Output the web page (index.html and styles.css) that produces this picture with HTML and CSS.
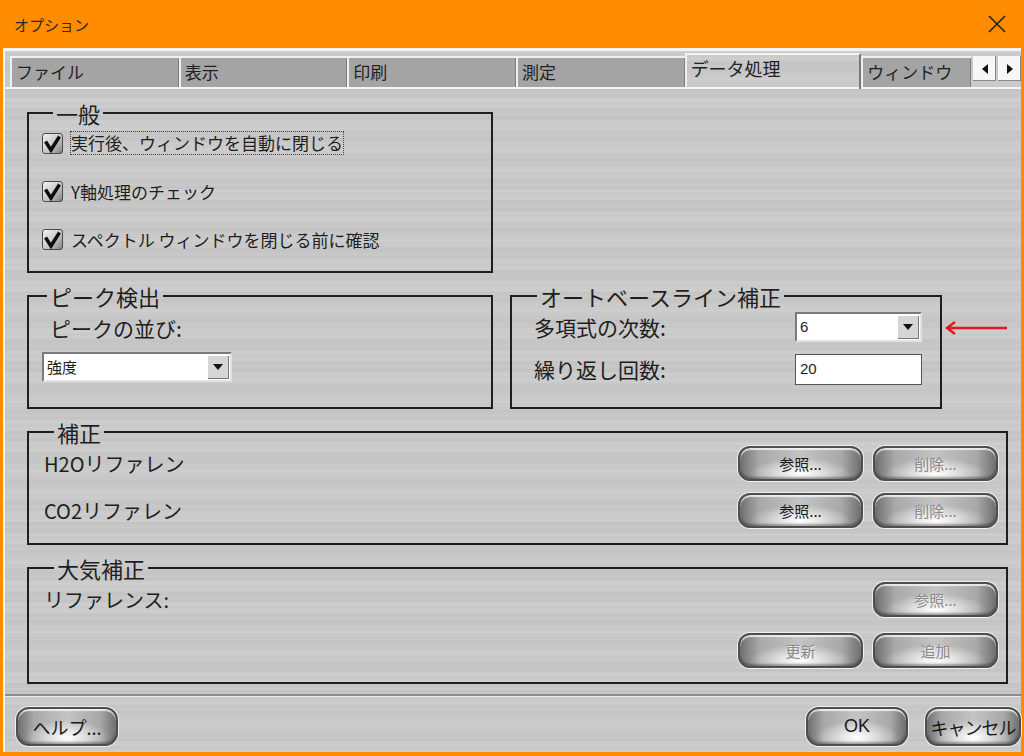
FILE: index.html
```html
<!DOCTYPE html>
<html lang="ja">
<head>
  <meta charset="UTF-8">
  <title>オプション</title>
  <link rel="stylesheet" href="styles.css">
</head>
<body>
  <div class="window">
    <!-- Barra de título -->
    <div class="titlebar">
      <span class="title">オプション</span>
      <svg class="close" width="18" height="18" viewBox="0 0 18 18">
        <path d="M1 1 L17 17 M17 1 L1 17" stroke="#222" stroke-width="1.6" fill="none"/>
      </svg>
    </div>

    <div class="frame">
      <!-- Pestañas -->
      <div class="tabs">
        <div class="tab">ファイル</div>
        <div class="tab">表示</div>
        <div class="tab">印刷</div>
        <div class="tab">測定</div>
        <div class="tab active">データ処理</div>
        <div class="tab narrow">ウィンドウ</div>
        <div class="tab-scroll">
          <span class="scroll-btn"><svg width="8" height="10" viewBox="0 0 8 10"><path d="M7 0 L1 5 L7 10 Z" fill="#111"/></svg></span>
          <span class="scroll-btn"><svg width="8" height="10" viewBox="0 0 8 10"><path d="M1 0 L7 5 L1 10 Z" fill="#111"/></svg></span>
        </div>
      </div>

      <!-- Página: Procesamiento de datos -->
      <div class="page">
        <fieldset class="group general">
          <legend>一般</legend>
          <label class="check">
            <svg class="box" width="21" height="21" viewBox="0 0 21 21">
              <defs>
                <linearGradient id="cb" x1="0" y1="0" x2="1" y2="1">
                  <stop offset="0" stop-color="#f4f4f4"/>
                  <stop offset="0.55" stop-color="#c8c8c8"/>
                  <stop offset="1" stop-color="#7c7c7c"/>
                </linearGradient>
              </defs>
              <rect x="0.5" y="0.5" width="20" height="20" rx="2.5" fill="url(#cb)" stroke="#4a4a4a"/>
              <path d="M3.5 8.5 L9 17 L17.5 3.5" stroke="#0c0c0c" stroke-width="3.4" fill="none"/>
            </svg>
            <span class="focus">実行後、ウィンドウを自動に閉じる</span>
          </label>
          <label class="check">
            <svg class="box" width="21" height="21" viewBox="0 0 21 21">
              <rect x="0.5" y="0.5" width="20" height="20" rx="2.5" fill="url(#cb)" stroke="#4a4a4a"/>
              <path d="M3.5 8.5 L9 17 L17.5 3.5" stroke="#0c0c0c" stroke-width="3.4" fill="none"/>
            </svg>
            <span>Y軸処理のチェック</span>
          </label>
          <label class="check">
            <svg class="box" width="21" height="21" viewBox="0 0 21 21">
              <rect x="0.5" y="0.5" width="20" height="20" rx="2.5" fill="url(#cb)" stroke="#4a4a4a"/>
              <path d="M3.5 8.5 L9 17 L17.5 3.5" stroke="#0c0c0c" stroke-width="3.4" fill="none"/>
            </svg>
            <span>スペクトル ウィンドウを閉じる前に確認</span>
          </label>
        </fieldset>

        <div class="row">
          <fieldset class="group peak">
            <legend>ピーク検出</legend>
            <div class="big-label">ピークの並び:</div>
            <div class="select wide">
              <span class="value">強度</span>
              <span class="drop"><svg width="10" height="6" viewBox="0 0 10 6"><path d="M0 0 L10 0 L5 6 Z" fill="#111"/></svg></span>
            </div>
          </fieldset>

          <fieldset class="group baseline">
            <legend>オートベースライン補正</legend>
            <div class="field">
              <span class="big-label">多項式の次数:</span>
              <div class="select">
                <span class="value">6</span>
                <span class="drop"><svg width="10" height="6" viewBox="0 0 10 6"><path d="M0 0 L10 0 L5 6 Z" fill="#111"/></svg></span>
              </div>
            </div>
            <div class="field">
              <span class="big-label">繰り返し回数:</span>
              <div class="input">20</div>
            </div>
          </fieldset>

          <svg class="pointer" width="64" height="16" viewBox="0 0 64 16">
            <path d="M2 8 H62 M10 2 L2 8 L10 14" stroke="#e8141c" stroke-width="2.4" fill="none"/>
          </svg>
        </div>

        <fieldset class="group full correction">
          <legend>補正</legend>
          <div class="line">
            <span class="mid-label">H2Oリファレン</span>
            <div class="buttons">
              <button class="metal">参照...</button>
              <button class="metal" disabled>削除...</button>
            </div>
          </div>
          <div class="line">
            <span class="mid-label">CO2リファレン</span>
            <div class="buttons">
              <button class="metal">参照...</button>
              <button class="metal" disabled>削除...</button>
            </div>
          </div>
        </fieldset>

        <fieldset class="group full atmosphere">
          <legend>大気補正</legend>
          <div class="line">
            <span class="mid-label">リファレンス:</span>
            <div class="buttons">
              <button class="metal" disabled>参照...</button>
            </div>
          </div>
          <div class="line">
            <span></span>
            <div class="buttons">
              <button class="metal" disabled>更新</button>
              <button class="metal" disabled>追加</button>
            </div>
          </div>
        </fieldset>
      </div>

      <!-- Botones inferiores -->
      <div class="footer">
        <button class="metal big help">ヘルプ...</button>
        <div class="footer-right">
          <button class="metal big ok">OK</button>
          <button class="metal big cancel">キャンセル</button>
        </div>
      </div>
    </div>
  </div>
</body>
</html>
```

FILE: styles.css
```css
/* Estilos generales */
body {
  margin: 0;
  font-family: "Noto Sans CJK JP", "DejaVu Sans", sans-serif;
  color: #1e1e1e;
  overflow: hidden;
}
.window {
  width: 1024px;
  height: 756px;
  display: flex;
  flex-direction: column;
  background: #ff8b00;
}
/* Barra de título */
.titlebar {
  height: 48px;
  flex: none;
  display: flex;
  align-items: center;
  justify-content: space-between;
  padding: 0 18px 0 14px;
}
.titlebar .title {
  font-size: 15px;
  color: #2a2a2a;
}
/* Marco principal con textura cepillada */
.frame {
  flex: 1;
  display: flex;
  flex-direction: column;
  margin: 0 3px 4px 3px;
  border-top: 3px solid #f4f4f4;
  border-left: 2px solid #f4f4f4;
  background-color: #c9c9c9;
  background-image:
    repeating-linear-gradient(180deg, rgba(255,255,255,0.08) 0 1px, transparent 1px 3px, rgba(0,0,0,0.018) 3px 4px, transparent 4px 7px),
    repeating-linear-gradient(180deg, rgba(255,255,255,0.04) 0 11px, rgba(0,0,0,0.015) 11px 23px);
}
/* Pestañas */
.tabs {
  height: 36px;
  flex: none;
  display: flex;
  align-items: flex-end;
  padding-left: 5px;
  border-bottom: 2px solid #f4f4f4;
}
.tab {
  width: 166px;
  height: 29px;
  line-height: 27px;
  padding-left: 4px;
  background: #a4a4a4;
  border-top: 2px solid #f0f0f0;
  border-left: 2px solid #f0f0f0;
  box-shadow: inset -1px 0 #7c7c7c;
  font-size: 17px;
  color: #222;
  white-space: nowrap;
  overflow: hidden;
}
.tab.active {
  width: 172px;
  height: 34px;
  line-height: 26px;
  margin-bottom: -2px;
  background: transparent;
  border-right: 2px solid #777;
  box-shadow: none;
  font-size: 18px;
}
.tab.narrow {
  width: 106px;
}
.tab-scroll {
  display: flex;
  gap: 2px;
  align-self: flex-start;
  margin-top: 5px;
  margin-left: 2px;
}
.scroll-btn {
  width: 23px;
  height: 25px;
  display: flex;
  align-items: center;
  justify-content: center;
  background: #f7f7f7;
  box-shadow: inset -1px -1px #888;
}
/* Página */
.page {
  flex: 1;
  padding: 11px 10px 0 22px;
  display: flex;
  flex-direction: column;
  gap: 10px;
}
.group {
  margin: 0;
  padding: 0;
  border: 2px solid #1e1e1e;
  box-sizing: border-box;
  min-width: 0;
}
.group legend {
  font-size: 22px;
  line-height: 26px;
  padding: 0 3px;
  color: #1e1e1e;
}
.general {
  width: 466px;
  height: 173px;
  padding: 2px 0 0 13px;
  display: flex;
  flex-direction: column;
  gap: 18px;
}
.general legend {
  margin-left: 11px;
}
.check {
  display: flex;
  align-items: center;
  height: 30px;
  gap: 8px;
  font-size: 17px;
}
.check .box {
  flex: none;
}
.check .focus {
  outline: 1px dotted #444;
  outline-offset: 0;
  line-height: 22px;
}
.row {
  display: flex;
  align-items: flex-start;
  height: 126px;
}
.peak {
  width: 466px;
  height: 126px;
  padding: 4px 0 0 13px;
}
.peak legend {
  margin-left: 5px;
}
.big-label {
  font-size: 21px;
  line-height: 30px;
}
.peak .big-label {
  padding-left: 8px;
  margin-bottom: 9px;
}
/* Listas desplegables y campos */
.select {
  width: 127px;
  height: 30px;
  box-sizing: border-box;
  display: flex;
  align-items: stretch;
  background: #fff;
  border: 2px solid #e2e2e2;
  border-top-color: #7a7a7a;
  border-left-color: #7a7a7a;
}
.select.wide {
  width: 190px;
}
.select .value {
  flex: 1;
  padding-left: 3px;
  font-size: 15px;
  line-height: 26px;
}
.select .drop {
  width: 22px;
  margin: 1px;
  display: flex;
  align-items: center;
  justify-content: center;
  background: #d6d6d6;
  box-shadow: inset 1px 1px #fff, inset -1px -1px #777;
}
.input {
  width: 127px;
  height: 31px;
  box-sizing: border-box;
  background: #fff;
  border: 1px solid #555;
  padding-left: 4px;
  font-family: "Liberation Sans", sans-serif;
  font-size: 15px;
  line-height: 28px;
}
.baseline {
  width: 432px;
  height: 126px;
  margin-left: 17px;
  padding: 3px 0 0 22px;
  display: flex;
  flex-direction: column;
  gap: 12px;
}
.baseline legend {
  margin-left: 3px;
}
.baseline .select .value {
  font-family: "Liberation Sans", sans-serif;
}
.field {
  display: flex;
  align-items: center;
  height: 30px;
}
.field .big-label {
  width: 261px;
}
.pointer {
  margin: 37px 0 0 3px;
}
/* Grupos de ancho completo */
.full {
  width: 981px;
  padding: 1px 8px 0 15px;
  display: flex;
  flex-direction: column;
}
.full legend {
  margin-left: 10px;
}
.correction {
  height: 126px;
  gap: 12px;
}
.atmosphere {
  height: 129px;
  gap: 16px;
}
.line {
  display: flex;
  align-items: center;
  justify-content: space-between;
  height: 35px;
}
.mid-label {
  font-size: 20px;
}
.buttons {
  display: flex;
  gap: 10px;
}
/* Botones metálicos */
.metal {
  width: 125px;
  height: 35px;
  box-sizing: border-box;
  border: 2px solid #4e4e4e;
  border-radius: 12px;
  font-family: "Noto Sans CJK JP", sans-serif;
  font-size: 15px;
  color: #1a1a1a;
  background:
    radial-gradient(ellipse 42% 50% at 50% 82%, rgba(255,255,255,1), rgba(255,255,255,0) 100%),
    linear-gradient(90deg, #6f6f6f 0%, #a8a8a8 16%, #c4c4c4 50%, #a8a8a8 84%, #6f6f6f 100%);
  box-shadow: 0 0 0 1px #f0f0f0, inset 0 2px 1px rgba(255,255,255,0.75), inset 0 -2px 2px rgba(0,0,0,0.3);
  cursor: pointer;
  padding: 0;
}
.metal:disabled {
  color: #8a8a8a;
  text-shadow: 1px 1px 0 #ececec;
  cursor: default;
}
/* Pie */
.footer {
  height: 58px;
  flex: none;
  box-sizing: border-box;
  border-top: 2px solid #8c8c8c;
  box-shadow: inset 0 1px #ececec;
  display: flex;
  align-items: flex-start;
  justify-content: space-between;
  padding: 11px 0 0 11px;
}
.metal.big {
  height: 39px;
  font-size: 18px;
  border-radius: 13px;
}
.help {
  width: 102px;
}
.footer-right {
  display: flex;
  gap: 17px;
}
.ok {
  width: 102px;
  font-family: "Liberation Sans", sans-serif;
}
.cancel {
  width: 96px;
  white-space: nowrap;
  letter-spacing: -1px;
}
```
